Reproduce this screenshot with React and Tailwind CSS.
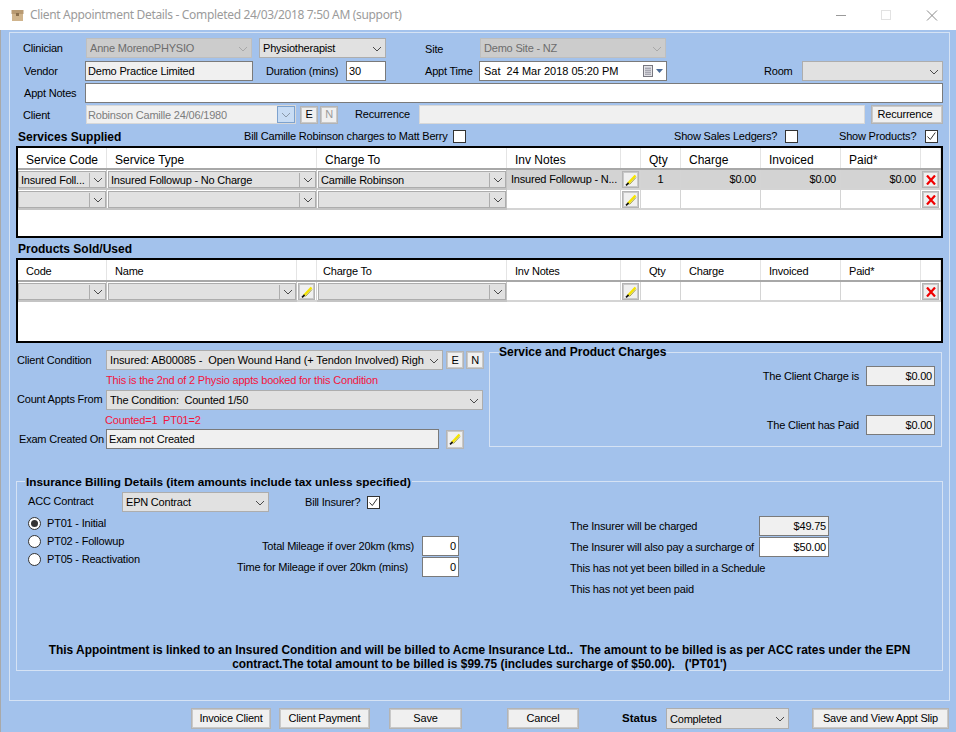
import React from 'react'

const Chevron = ({ color = '#4a4a4a' }) => (
  <svg width="10" height="6" viewBox="0 0 10 6" fill="none" stroke={color} strokeWidth="1">
    <path d="M1 1l4 4 4-4" />
  </svg>
)

const Pencil = () => (
  <svg width="12" height="12" viewBox="0 0 12 12" fill="none">
    <path d="M3 9.5L10.5 1.5" stroke="#f5e400" strokeWidth="2.4" />
    <path d="M4.5 10.5L11 3.5" stroke="#8a8300" strokeWidth="0.7" />
    <path d="M1 11.3L3.6 9" stroke="#111" strokeWidth="1.7" />
  </svg>
)

const RedX = () => (
  <svg width="10" height="10" viewBox="0 0 10 10" fill="none" stroke="#f00000" strokeWidth="2.2">
    <path d="M1 0.5l8 9M9 0.5l-8 9" />
  </svg>
)

const Calendar = () => (
  <svg width="24" height="14" viewBox="0 0 24 14" fill="none">
    <rect x="1.5" y="1.5" width="9" height="11" fill="#e4e4e8" stroke="#77777f" />
    <path d="M3 4.5h6M3 6.5h6M3 8.5h6M3 10.5h6M4 3v8M6 3v8M8 3v8" stroke="#9a9aa4" strokeWidth="0.7" />
    <path d="M14 5h7l-3.500 4z" fill="#4a6a96" />
  </svg>
)

function Combo({ className, value, dim }) {
  return (
    <div
      className={`flex items-center border pl-[3px] pt-px ${
        dim ? 'border-[#bfbfbf] bg-[#cccccc] text-[#6d6d6d]' : 'border-[#adadad] bg-[#e1e1e1] text-black'
      } ${className}`}
    >
      <span className="flex-1 overflow-hidden whitespace-pre">{value}</span>
      <span className="flex w-[17px] shrink-0 justify-center">
        <Chevron color={dim ? '#a8a8a8' : '#4a4a4a'} />
      </span>
    </div>
  )
}

function TextBox({ className, value, ro, right }) {
  return (
    <div
      className={`flex items-center border border-[#7a7a7a] px-[2px] pt-px ${
        ro ? 'bg-[#f0f0f0]' : 'bg-white'
      } ${right ? 'justify-end' : ''} ${className}`}
    >
      {value}
    </div>
  )
}

function Btn({ className, children, dim }) {
  return (
    <div
      className={`flex items-center justify-center border-2 border-[#c9c9c9] bg-[#f0f0f0] outline outline-1 -outline-offset-1 outline-[#b4b4b4] ${
        dim ? 'text-[#9a9a9a]' : 'text-black'
      } ${className}`}
    >
      {children}
    </div>
  )
}

function Check({ on }) {
  return (
    <span className="flex h-[13px] w-[13px] shrink-0 items-center justify-center border border-[#333] bg-white">
      {on && (
        <svg width="11" height="11" viewBox="0 0 11 11" fill="none" stroke="#333" strokeWidth="1">
          <path d="M1.500 5.500l2.800 3 5-7" />
        </svg>
      )}
    </span>
  )
}

function Radio({ on, label }) {
  return (
    <div className="flex h-[18px] items-center">
      <span className="flex h-[13px] w-[13px] items-center justify-center rounded-full border border-[#333] bg-white">
        {on && <span className="h-[7px] w-[7px] rounded-full bg-[#333]" />}
      </span>
      <span className="ml-[6px]">{label}</span>
    </div>
  )
}

// grid cells
const Head = ({ children, className = '' }) => (
  <div className={`flex items-center border-r border-[#e4e4e4] pl-[8px] pt-[3px] ${className}`}>{children}</div>
)

function GridCombo({ value, first }) {
  return (
    <div className={`flex items-stretch border-b-2 border-r border-[#c4c4c4] pt-px ${first ? '' : 'pl-px'}`}>
      <div className="flex flex-1 items-center overflow-hidden border border-[#adadad] bg-[#e1e1e1] pl-[2px] pt-px">
        <span className="flex-1 overflow-hidden">{value}</span>
        <span className="flex h-full w-[16px] shrink-0 items-center justify-center border-l border-[#adadad]">
          <Chevron />
        </span>
      </div>
    </div>
  )
}

const Cell = ({ children, sel, className = '' }) => (
  <div
    className={`flex items-center overflow-hidden border-b-2 border-r border-[#d4d4d4] pt-px ${
      sel ? 'bg-[#d3d3d3]' : 'bg-white'
    } ${className}`}
  >
    {children}
  </div>
)

const IconCell = ({ children, sel }) => (
  <Cell sel={sel} className="justify-center">
    <Btn className="h-[17px] w-[17px]">{children}</Btn>
  </Cell>
)

export default function App() {
  return (
    <div className="h-[732px] w-[956px] overflow-hidden whitespace-nowrap bg-white [font-family:Liberation_Sans,Arial,sans-serif] text-[11px] leading-none tracking-[-0.2px] text-black">
      {/* title bar */}
      <div className="flex h-[30px] items-center">
        <svg className="ml-[11px]" width="13" height="13" viewBox="0 0 13 13">
          <rect x="0.500" y="1" width="12" height="4" fill="#b89a72" />
          <rect x="1" y="5" width="11" height="7" fill="#d0b48c" />
          <rect x="5" y="4" width="3" height="3" fill="#8a6f4c" />
        </svg>
        <span className="ml-[6px] [font-family:Noto_Sans,sans-serif] text-[12px] tracking-[-0.33px] text-[#9b9b9b]">
          Client Appointment Details - Completed 24/03/2018 7:50 AM (support)
        </span>
        <svg className="ml-auto" width="108" height="14" viewBox="0 0 108 14" fill="none">
          <path d="M5 7.500h10" stroke="#9a9a9a" />
          <rect x="50.500" y="2.500" width="9" height="9" stroke="#e2e2e2" />
          <path d="M96 2.500l10 10M106 2.500l-10 10" stroke="#8a8a8a" />
        </svg>
        <span className="w-[17px]" />
      </div>

      {/* form body */}
      <div className="h-[702px] border-l border-[#a9a9a9] bg-[#a3c2ec] pt-[2px]">
        <div className="ml-[8px] h-[669px] w-[941px] border border-[#d5e2f4] pt-[5px]">
          {/* header fields */}
          <div className="flex h-[20px] items-center">
            <span className="ml-[13px] w-[63px] pt-px">Clinician</span>
            <Combo dim className="h-[20px] w-[166px]" value="Anne MorenoPHYSIO" />
            <Combo className="ml-[7px] h-[20px] w-[127px]" value="Physiotherapist" />
            <span className="ml-[39px] w-[55px] pt-[3px]">Site</span>
            <Combo dim className="h-[20px] w-[186px]" value="Demo Site - NZ" />
          </div>
          <div className="mt-[3px] flex h-[20px] items-center">
            <span className="ml-[14px] w-[61px]">Vendor</span>
            <TextBox ro className="h-[20px] w-[168px]" value="Demo Practice Limited" />
            <span className="ml-[13px] w-[80px]">Duration (mins)</span>
            <TextBox className="h-[20px] w-[40px]" value="30" />
            <span className="ml-[39px] w-[54px] pt-px">Appt Time</span>
            <div className="flex h-[20px] w-[188px] items-center border border-[#7a7a7a] bg-white pl-[4px] tracking-normal">
              <span className="flex-1">Sat&nbsp;&nbsp;24 Mar 2018 05:20 PM</span>
              <Calendar />
            </div>
            <span className="ml-[97px] w-[38px]">Room</span>
            <Combo className="h-[20px] w-[141px]" value="" />
          </div>
          <div className="mt-[2px] flex h-[20px] items-center">
            <span className="ml-[14px] w-[61px] pt-px">Appt Notes</span>
            <TextBox className="h-[20px] w-[858px]" value="" />
          </div>
          <div className="mt-[2px] flex h-[19px] items-center">
            <span className="ml-[13px] w-[63px] pt-px">Client</span>
            <div className="flex h-[19px] w-[210px] items-center border border-[#d8d8d8] bg-[#f0f0f0] pl-[1px] text-[#7d7d7d]">
              <span className="flex-1 pt-px">Robinson Camille 24/06/1980</span>
              <span className="flex h-full w-[18px] items-center justify-center border border-[#7da2ce] bg-[#c8dcf4]">
                <Chevron color="#8a98a8" />
              </span>
            </div>
            <Btn className="ml-[4px] h-[18px] w-[18px]">E</Btn>
            <Btn dim className="ml-[2px] h-[18px] w-[18px]">N</Btn>
            <span className="-mt-px ml-[17px] w-[64px]">Recurrence</span>
            <div className="h-[19px] w-[446px] border border-[#d8d8d8] bg-[#f0f0f0]" />
            <Btn className="ml-[6px] h-[19px] w-[72px] pr-[4px]">Recurrence</Btn>
          </div>

          {/* services */}
          <div className="mt-[5px] flex h-[15px] items-center">
            <span className="ml-[8px] w-[226px] text-[12px] font-bold tracking-normal">Services Supplied</span>
            <span className="w-[209px]">Bill Camille Robinson charges to Matt Berry</span>
            <Check />
            <span className="ml-[208px] w-[111px]">Show Sales Ledgers?</span>
            <Check />
            <span className="ml-[41px] w-[86px]">Show Products?</span>
            <Check on />
          </div>
          <div className="ml-[6px] mt-[2px] h-[92px] w-[927px] border-2 border-black bg-white">
            <div className="grid h-[22px] grid-cols-[89px_210px_190px_114px_20px_40px_80px_80px_80px_20px] border-b-2 border-[#a8a8a8] text-[12px] tracking-normal">
              <Head>Service Code</Head>
              <Head>Service Type</Head>
              <Head>Charge To</Head>
              <Head>Inv Notes</Head>
              <Head />
              <Head>Qty</Head>
              <Head>Charge</Head>
              <Head>Invoiced</Head>
              <Head>Paid*</Head>
              <Head />
            </div>
            <div className="grid h-[20px] grid-cols-[89px_210px_190px_114px_20px_40px_80px_80px_80px_20px]">
              <GridCombo first value="Insured Foll..." />
              <GridCombo value="Insured Followup - No Charge" />
              <GridCombo value="Camille Robinson" />
              <Cell sel className="pl-[4px]">Insured Followup - N...</Cell>
              <IconCell sel><Pencil /></IconCell>
              <Cell sel className="justify-center">1</Cell>
              <Cell sel className="justify-end pr-[4px]">$0.00</Cell>
              <Cell sel className="justify-end pr-[4px]">$0.00</Cell>
              <Cell sel className="justify-end pr-[4px]">$0.00</Cell>
              <IconCell sel><RedX /></IconCell>
            </div>
            <div className="grid h-[20px] grid-cols-[89px_210px_190px_114px_20px_40px_80px_80px_80px_20px]">
              <GridCombo first value="" />
              <GridCombo value="" />
              <GridCombo value="" />
              <Cell />
              <IconCell><Pencil /></IconCell>
              <Cell />
              <Cell />
              <Cell />
              <Cell />
              <IconCell><RedX /></IconCell>
            </div>
          </div>

          {/* products */}
          <div className="ml-[8px] mt-[3px] flex h-[16px] items-center text-[12px] font-bold tracking-normal">Products Sold/Used</div>
          <div className="ml-[6px] mt-px h-[85px] w-[927px] border-2 border-black bg-white">
            <div className="grid h-[22px] grid-cols-[89px_190px_20px_190px_114px_20px_40px_80px_80px_80px_20px] border-b-2 border-[#a8a8a8]">
              <Head>Code</Head>
              <Head>Name</Head>
              <Head />
              <Head className="!pl-[6px]">Charge To</Head>
              <Head>Inv Notes</Head>
              <Head />
              <Head>Qty</Head>
              <Head>Charge</Head>
              <Head>Invoiced</Head>
              <Head>Paid*</Head>
              <Head />
            </div>
            <div className="grid h-[20px] grid-cols-[89px_190px_20px_190px_114px_20px_40px_80px_80px_80px_20px]">
              <GridCombo first value="" />
              <GridCombo value="" />
              <IconCell><Pencil /></IconCell>
              <GridCombo value="" />
              <Cell />
              <IconCell><Pencil /></IconCell>
              <Cell />
              <Cell />
              <Cell />
              <Cell />
              <IconCell><RedX /></IconCell>
            </div>
          </div>

          {/* condition + charges */}
          <div className="mt-[7px] flex">
            <div className="w-[479px]">
              <div className="flex h-[20px] items-center">
                <span className="ml-[7px] w-[89px]">Client Condition</span>
                <Combo className="h-[20px] w-[337px] tracking-[-0.1px]" value="Insured: AB00085 -  Open Wound Hand (+ Tendon Involved) Righ" />
                <Btn className="ml-[3px] h-[18px] w-[18px]">E</Btn>
                <Btn className="ml-[2px] h-[18px] w-[18px]">N</Btn>
              </div>
              <div className="ml-[96px] mt-[3px] flex h-[14px] items-center text-[#f5143c]">
                This is the 2nd of 2 Physio appts booked for this Condition
              </div>
              <div className="mt-[3px] flex h-[20px] items-center">
                <span className="-mt-px ml-[7px] w-[89px]">Count Appts From</span>
                <Combo className="h-[20px] w-[377px]" value="The Condition:  Counted 1/50" />
              </div>
              <div className="ml-[95px] mt-[3px] flex h-[14px] items-center text-[#f5143c]">
                Counted=1&nbsp;&nbsp;PT01=2
              </div>
              <div className="mt-[2px] flex h-[20px] items-center">
                <span className="ml-[9px] w-[87px]">Exam Created On</span>
                <TextBox ro className="h-[20px] w-[333px]" value="Exam not Created" />
                <Btn className="ml-[7px] h-[19px] w-[18px]"><Pencil /></Btn>
              </div>
            </div>
            <div className="relative mt-[2px] flex h-[95px] w-[453px] flex-col items-end border border-[#d5e2f4] pr-[6px] pt-[13px]">
              <span className="absolute left-[9px] top-[-7px] bg-[#a3c2ec] text-[12px] font-bold tracking-normal">Service and Product Charges</span>
              <div className="flex h-[20px] items-center">
                <span className="mr-[7px]">The Client Charge is</span>
                <TextBox ro right className="h-[20px] w-[69px]" value="$0.00" />
              </div>
              <div className="mt-[29px] flex h-[20px] items-center">
                <span className="mr-[7px]">The Client has Paid</span>
                <TextBox ro right className="h-[20px] w-[69px]" value="$0.00" />
              </div>
            </div>
          </div>

          {/* insurance billing */}
          <div className="relative ml-[6px] mt-[32px] h-[190px] w-[927px] border border-[#d5e2f4] pt-[10px]">
            <span className="absolute left-[8px] top-[-5px] bg-[#a3c2ec] px-px text-[11.8px] font-bold tracking-normal">
              Insurance Billing Details (item amounts include tax unless specified)
            </span>
            <div className="flex h-[20px] items-center">
              <span className="-mt-[2px] ml-[11px] w-[94px]">ACC Contract</span>
              <Combo className="h-[20px] w-[147px]" value="EPN Contract" />
              <span className="ml-[36px] w-[62px]">Bill Insurer?</span>
              <Check on />
            </div>
            <div className="mt-[2px] flex h-[129px]">
              <div className="ml-[11px] w-[190px]">
                <Radio on label="PT01 - Initial" />
                <Radio label="PT02 - Followup" />
                <Radio label="PT05 - Reactivation" />
              </div>
              <div className="mt-[22px] w-[241px]">
                <div className="flex h-[20px] items-center justify-end">
                  <span className="mr-[8px]">Total Mileage if over 20km (kms)</span>
                  <TextBox right className="h-[20px] w-[37px]" value="0" />
                </div>
                <div className="mt-px flex h-[20px] items-center justify-end">
                  <span className="mr-[14px]">Time for Mileage if over 20km (mins)</span>
                  <TextBox right className="h-[20px] w-[37px]" value="0" />
                </div>
              </div>
              <div className="ml-[111px] mt-[2px] w-[259px]">
                <div className="flex h-[20px] items-center justify-between">
                  <span>The Insurer will be charged</span>
                  <TextBox ro right className="h-[20px] w-[70px]" value="$49.75" />
                </div>
                <div className="mt-px flex h-[20px] items-center justify-between">
                  <span>The Insurer will also pay a surcharge of</span>
                  <TextBox right className="h-[20px] w-[70px]" value="$50.00" />
                </div>
                <div className="mt-px flex h-[20px] items-center">This has not yet been billed in a Schedule</div>
                <div className="mt-px flex h-[20px] items-center">This has not yet been paid</div>
              </div>
            </div>
            <div className="mx-auto w-[880px] whitespace-pre-wrap text-center text-[11.9px] font-bold leading-[14px] tracking-normal">
              This Appointment is linked to an Insured Condition and will be billed to Acme Insurance Ltd..  The amount to be billed is as per ACC rates under the EPN contract.The total amount to be billed is $99.75 (includes surcharge of $50.00).   ('PT01')
            </div>
          </div>
        </div>

        {/* bottom buttons */}
        <div className="mt-[7px] flex h-[21px] items-center">
          <Btn className="ml-[190px] h-[21px] w-[80px]">Invoice Client</Btn>
          <Btn className="ml-[8px] h-[21px] w-[91px]">Client Payment</Btn>
          <Btn className="ml-[19px] h-[21px] w-[73px]">Save</Btn>
          <Btn className="ml-[45px] h-[21px] w-[72px]">Cancel</Btn>
          <span className="ml-[43px] w-[44px] text-[11.5px] font-bold tracking-normal">Status</span>
          <Combo className="h-[21px] w-[123px]" value="Completed" />
          <Btn className="ml-[23px] h-[21px] w-[137px]">Save and View Appt Slip</Btn>
        </div>
      </div>
    </div>
  )
}
